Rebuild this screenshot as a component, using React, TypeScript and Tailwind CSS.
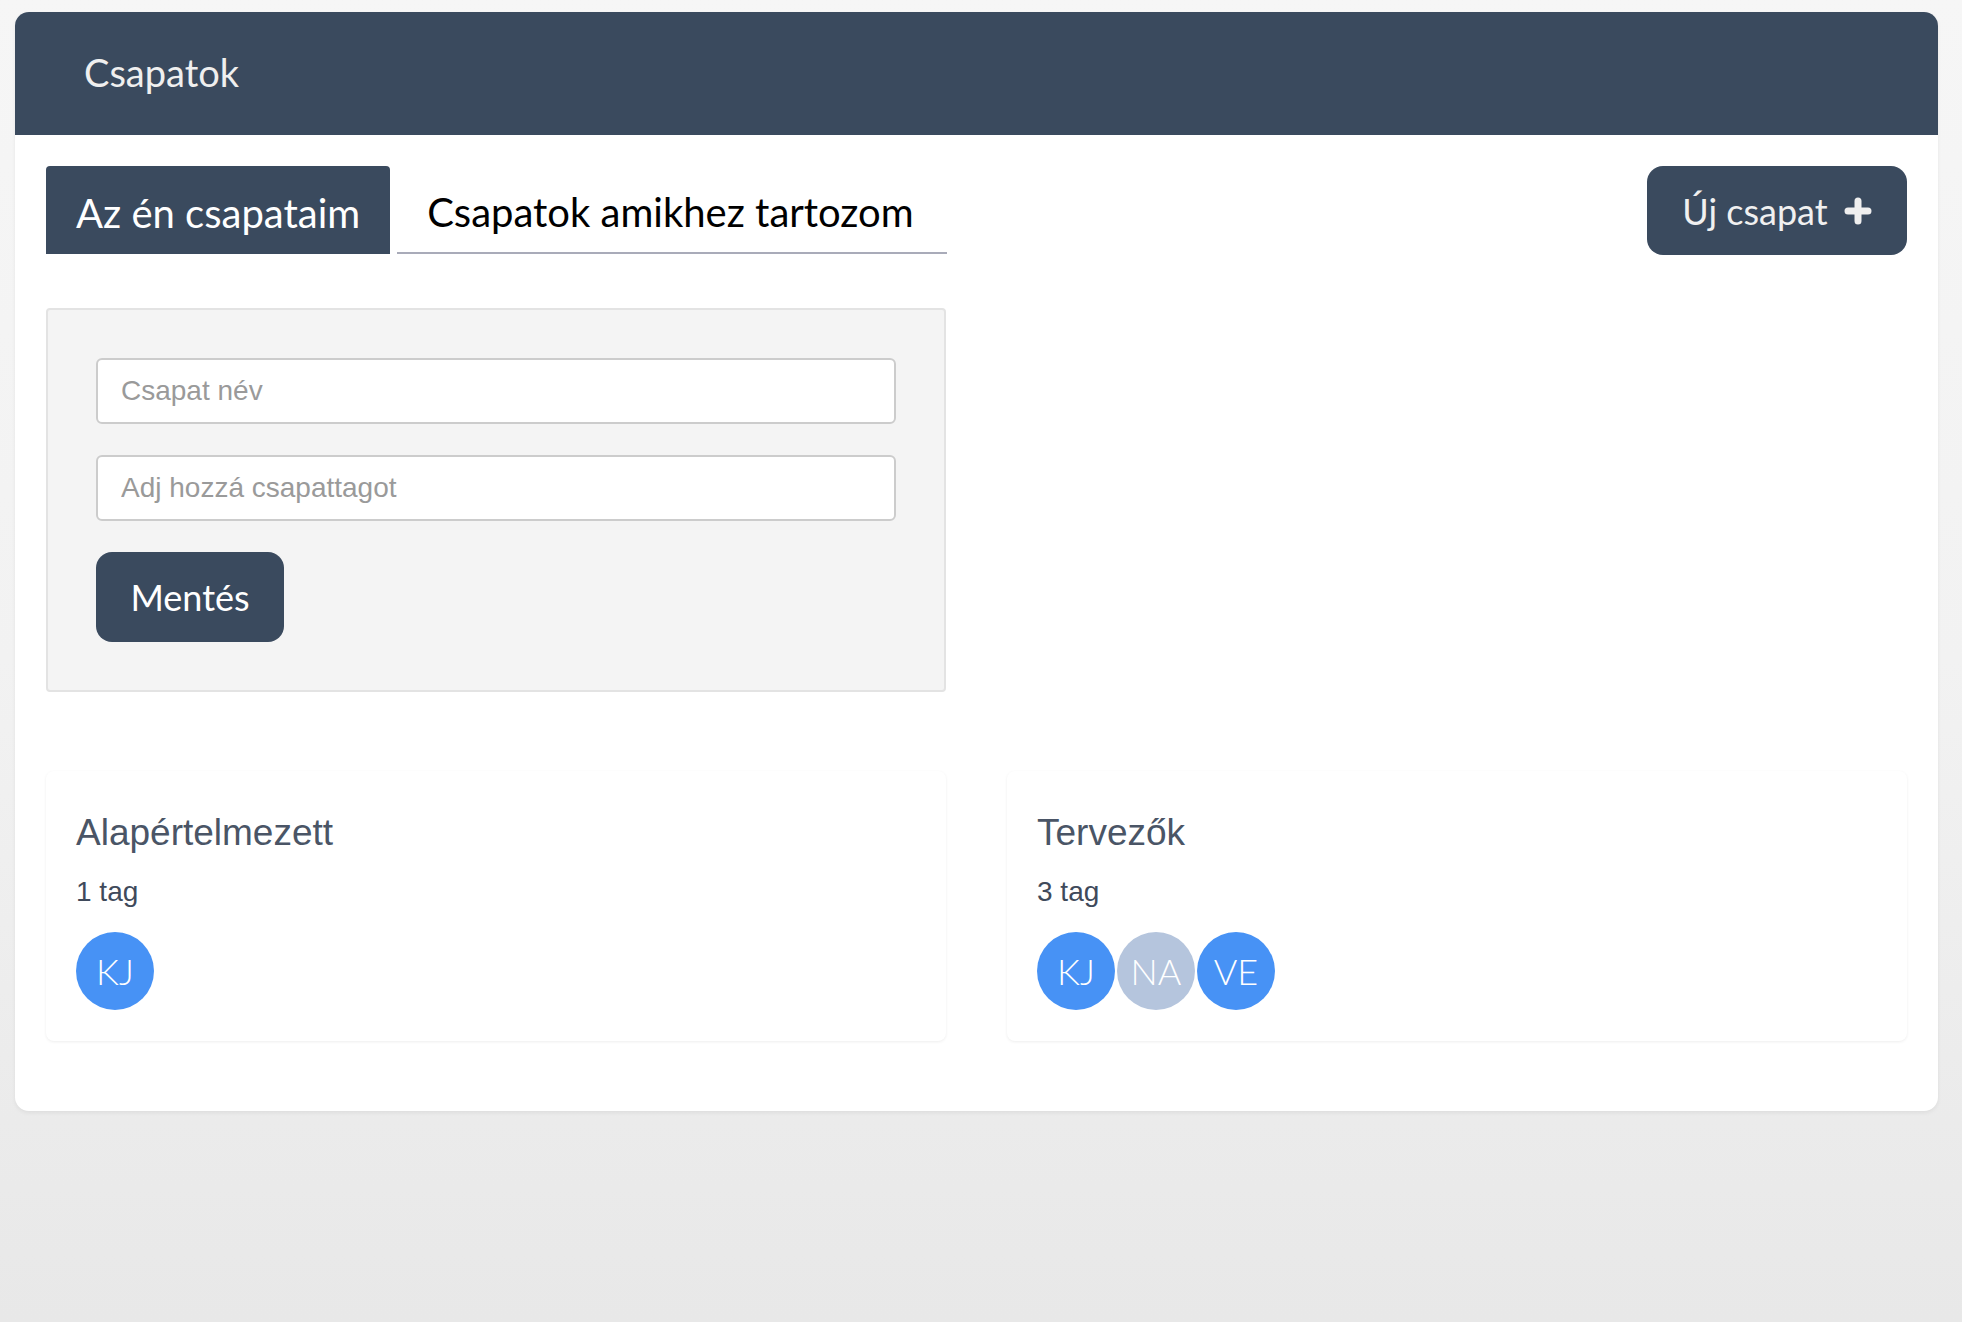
import React from "react";

const lato = { fontFamily: "Lato, 'Open Sans', sans-serif" };
const arial = { fontFamily: "'Liberation Sans', Arial, sans-serif" };

function Avatar({ initials, color }: { initials: string; color: string }) {
  return (
    <div
      className={`w-[78px] h-[78px] rounded-full flex items-center justify-center text-white text-[36px] font-light leading-none ${color}`}
      style={lato}
    >
      {initials}
    </div>
  );
}

function TeamCard({
  title,
  count,
  members,
}: {
  title: string;
  count: string;
  members: { initials: string; color: string }[];
}) {
  return (
    <div className="bg-white rounded-[8px] shadow-[0_1px_3px_rgba(0,0,0,0.07)] pt-[43px] pb-[31px] px-[30px]">
      <div className="text-[37px] leading-none text-[#4a5566]" style={arial}>
        {title}
      </div>
      <div className="mt-[27px] text-[28px] leading-none text-[#3f4a5b]" style={arial}>
        {count}
      </div>
      <div className="mt-[26px] flex gap-[2px]">
        {members.map((m, i) => (
          <Avatar key={i} initials={m.initials} color={m.color} />
        ))}
      </div>
    </div>
  );
}

export default function App() {
  return (
    <div className="min-h-screen w-full bg-gradient-to-b from-[#f6f6f6] via-[#f2f2f2] to-[#e8e8e8] pt-[12px] pl-[15px] pr-[24px]">
      <div className="bg-white rounded-[14px] overflow-hidden shadow-[0_2px_4px_rgba(0,0,0,0.06)]">
        <div className="h-[123px] bg-[#3a4a5e] flex items-center pl-[69px] pb-[4px]">
          <span className="text-[#efefef] text-[38px] leading-none" style={lato}>
            Csapatok
          </span>
        </div>
        <div className="px-[31px] pt-[31px] pb-[70px]">
          <div className="flex items-start justify-between">
            <div className="flex items-end gap-[7px]">
              <div
                className="h-[88px] bg-[#3a4a5e] rounded-t-[4px] flex items-center px-[30px] pt-[5px] text-white text-[40px] leading-none"
                style={lato}
              >
                Az én csapataim
              </div>
              <div
                className="h-[88px] border-b-2 border-[#a9abb9] flex items-center pl-[30px] pr-[33px] pt-[5px] text-black text-[40px] leading-none"
                style={lato}
              >
                Csapatok amikhez tartozom
              </div>
            </div>
            <button
              className="h-[89px] w-[260px] bg-[#3a4a5e] rounded-[16px] flex items-center justify-center gap-[16px] text-[#f0f0f0] text-[36px] leading-none"
              style={lato}
            >
              <span>Új csapat</span>
              <svg width="28" height="28" viewBox="0 0 28 28">
                <path d="M14 4 V24 M4 14 H24" stroke="#efefef" strokeWidth="7" strokeLinecap="round" />
              </svg>
            </button>
          </div>

          <div className="grid grid-cols-2 gap-[61px]">
            <div className="mt-[53px] bg-[#f4f4f4] border-2 border-[#e3e3e3] rounded-[4px] p-[48px]">
              <div className="flex flex-col gap-[31px]">
                <input
                  className="h-[66px] w-full bg-white border-2 border-[#cccccc] rounded-[6px] px-[23px] text-[28px] placeholder:text-[#9a9a9a] outline-none"
                  style={arial}
                  placeholder="Csapat név"
                />
                <input
                  className="h-[66px] w-full bg-white border-2 border-[#cccccc] rounded-[6px] px-[23px] text-[28px] placeholder:text-[#9a9a9a] outline-none"
                  style={arial}
                  placeholder="Adj hozzá csapattagot"
                />
                <div>
                  <button
                    className="h-[90px] w-[188px] bg-[#3a4a5e] rounded-[16px] text-white text-[36px] leading-none"
                    style={lato}
                  >
                    Mentés
                  </button>
                </div>
              </div>
            </div>
            <div />
          </div>

          <div className="mt-[79px] grid grid-cols-2 gap-[61px]">
            <TeamCard
              title="Alapértelmezett"
              count="1 tag"
              members={[{ initials: "KJ", color: "bg-[#4792f5]" }]}
            />
            <TeamCard
              title="Tervezők"
              count="3 tag"
              members={[
                { initials: "KJ", color: "bg-[#4792f5]" },
                { initials: "NA", color: "bg-[#b5c5dd]" },
                { initials: "VE", color: "bg-[#4792f5]" },
              ]}
            />
          </div>
        </div>
      </div>
    </div>
  );
}
